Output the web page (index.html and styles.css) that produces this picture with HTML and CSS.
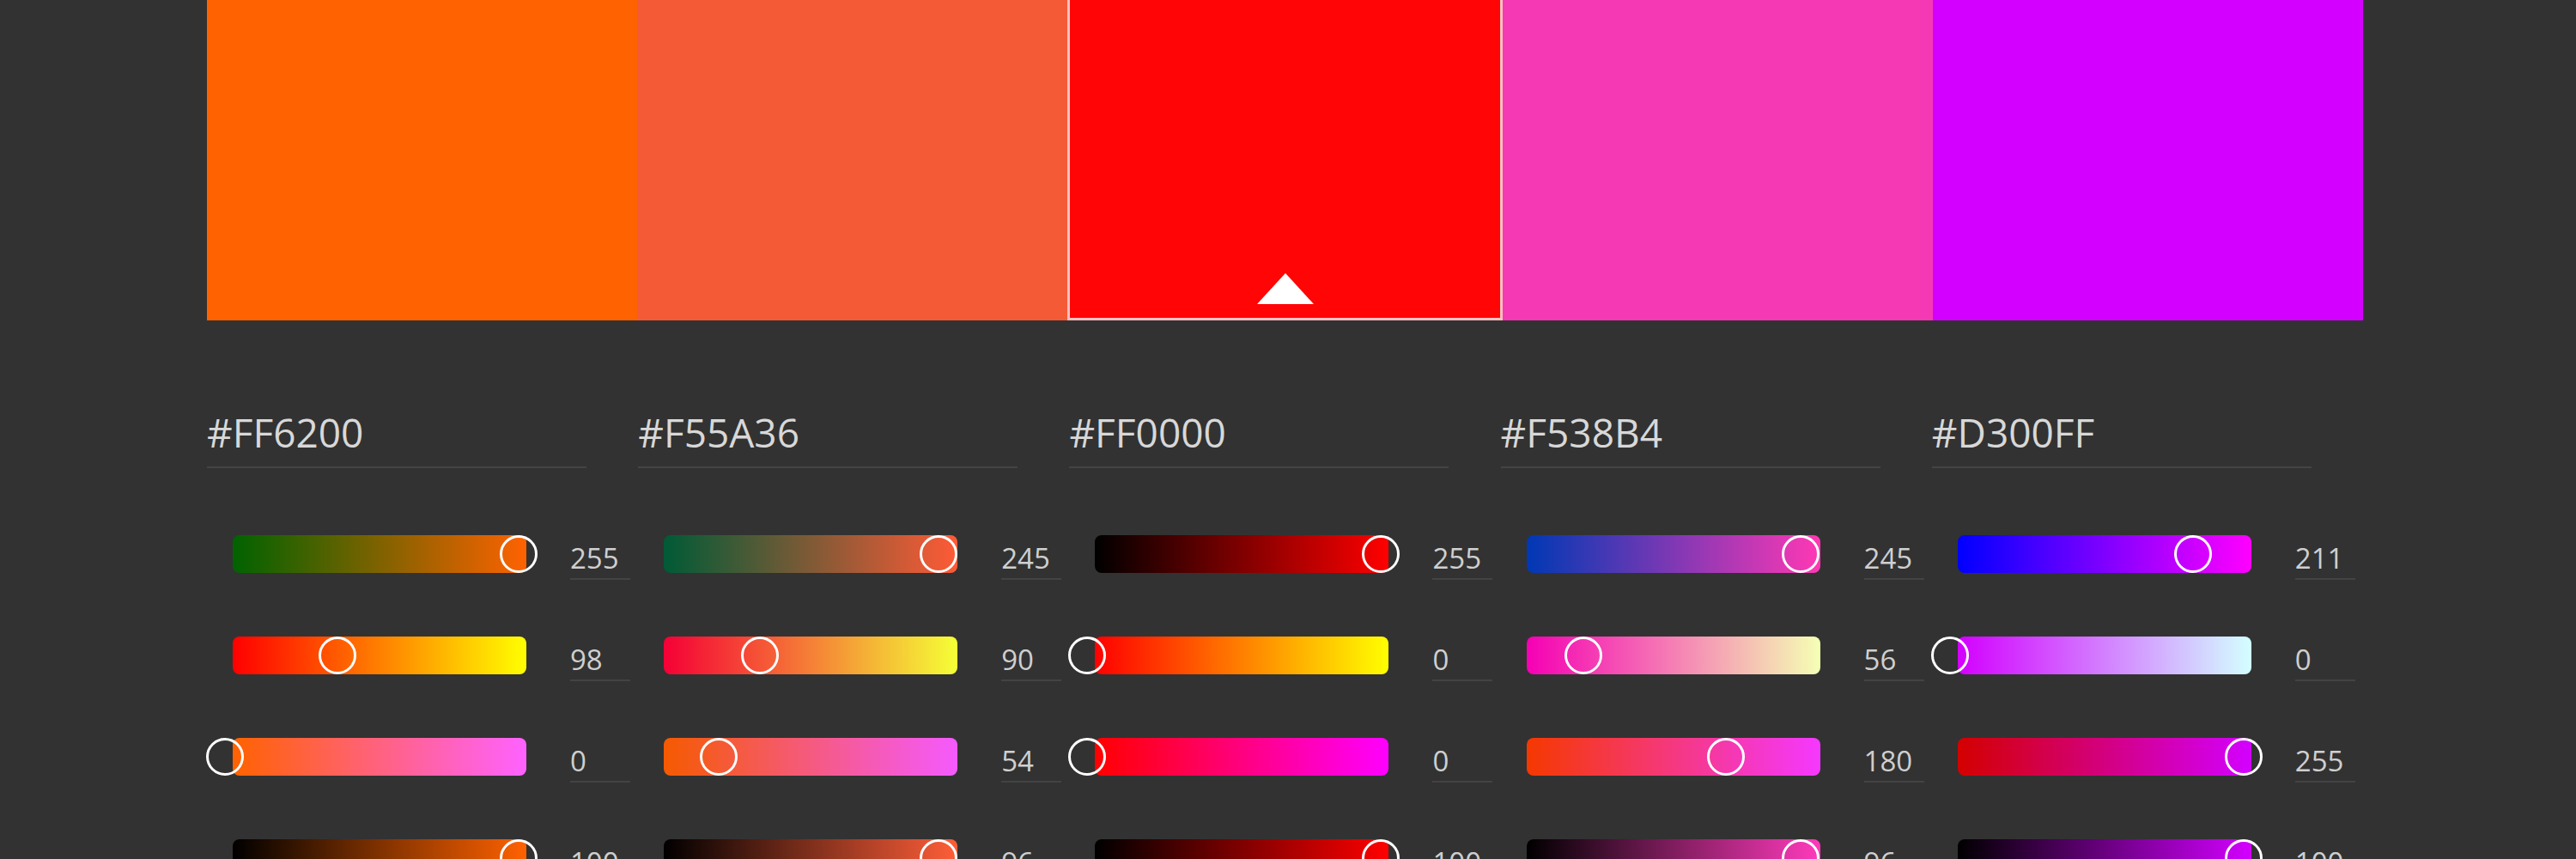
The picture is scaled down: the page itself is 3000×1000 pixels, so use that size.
FILE: index.html
```html
<!DOCTYPE html>
<html lang="en">

<head>
    <meta charset="UTF-8">
    <meta name="viewport" content="width=device-width, initial-scale=1.0">
    <title>Color Theme</title>
    <link rel="stylesheet" href="styles.css">
</head>

<body>

    <div class="swatches">
        <div class="swatch" style="background-color: #ff6200;"></div>
        <div class="swatch" style="background-color: #f55a36;"></div>
        <div class="swatch selected" style="background-color: #ff0505;">
            <span class="marker"></span>
        </div>
        <div class="swatch" style="background-color: #f538b4;"></div>
        <div class="swatch" style="background-color: #d300ff;"></div>
    </div>

    <div class="editors">
        <!-- #FF6200 -->
        <div class="editor">
            <div class="hex">#FF6200</div>
            <div class="channel">
                <div class="track" style="background: linear-gradient(to right, rgb(0,98,0), rgb(255,98,0));">
                    <span class="thumb" style="left: calc(100% - 31px);"></span>
                </div>
                <span class="value">255</span>
            </div>
            <div class="channel">
                <div class="track" style="background: linear-gradient(to right, rgb(255,0,0), rgb(255,255,0));">
                    <span class="thumb" style="left: calc(38.43% - 31px);"></span>
                </div>
                <span class="value">98</span>
            </div>
            <div class="channel">
                <div class="track" style="background: linear-gradient(to right, rgb(255,98,0), rgb(255,98,255));">
                    <span class="thumb" style="left: calc(0% - 31px);"></span>
                </div>
                <span class="value">0</span>
            </div>
            <div class="channel">
                <div class="track" style="background: linear-gradient(to right, #000, rgb(255,98,0));">
                    <span class="thumb" style="left: calc(100% - 31px);"></span>
                </div>
                <span class="value">100</span>
            </div>
        </div>

        <!-- #F55A36 -->
        <div class="editor">
            <div class="hex">#F55A36</div>
            <div class="channel">
                <div class="track" style="background: linear-gradient(to right, rgb(0,90,54), rgb(255,90,54));">
                    <span class="thumb" style="left: calc(96.08% - 31px);"></span>
                </div>
                <span class="value">245</span>
            </div>
            <div class="channel">
                <div class="track" style="background: linear-gradient(to right, rgb(245,0,54), rgb(245,255,54));">
                    <span class="thumb" style="left: calc(35.29% - 31px);"></span>
                </div>
                <span class="value">90</span>
            </div>
            <div class="channel">
                <div class="track" style="background: linear-gradient(to right, rgb(245,90,0), rgb(245,90,255));">
                    <span class="thumb" style="left: calc(21.18% - 31px);"></span>
                </div>
                <span class="value">54</span>
            </div>
            <div class="channel">
                <div class="track" style="background: linear-gradient(to right, #000, rgb(255,94,56));">
                    <span class="thumb" style="left: calc(96% - 31px);"></span>
                </div>
                <span class="value">96</span>
            </div>
        </div>

        <!-- #FF0000 -->
        <div class="editor">
            <div class="hex">#FF0000</div>
            <div class="channel">
                <div class="track" style="background: linear-gradient(to right, #000, #ff0000);">
                    <span class="thumb" style="left: calc(100% - 31px);"></span>
                </div>
                <span class="value">255</span>
            </div>
            <div class="channel">
                <div class="track" style="background: linear-gradient(to right, #ff0000, #ffff00);">
                    <span class="thumb" style="left: calc(0% - 31px);"></span>
                </div>
                <span class="value">0</span>
            </div>
            <div class="channel">
                <div class="track" style="background: linear-gradient(to right, #ff0000, #ff00ff);">
                    <span class="thumb" style="left: calc(0% - 31px);"></span>
                </div>
                <span class="value">0</span>
            </div>
            <div class="channel">
                <div class="track" style="background: linear-gradient(to right, #000, #ff0000);">
                    <span class="thumb" style="left: calc(100% - 31px);"></span>
                </div>
                <span class="value">100</span>
            </div>
        </div>

        <!-- #F538B4 -->
        <div class="editor">
            <div class="hex">#F538B4</div>
            <div class="channel">
                <div class="track" style="background: linear-gradient(to right, rgb(0,56,180), rgb(255,56,180));">
                    <span class="thumb" style="left: calc(96.08% - 31px);"></span>
                </div>
                <span class="value">245</span>
            </div>
            <div class="channel">
                <div class="track" style="background: linear-gradient(to right, rgb(245,0,180), rgb(245,255,180));">
                    <span class="thumb" style="left: calc(21.96% - 31px);"></span>
                </div>
                <span class="value">56</span>
            </div>
            <div class="channel">
                <div class="track" style="background: linear-gradient(to right, rgb(245,56,0), rgb(245,56,255));">
                    <span class="thumb" style="left: calc(70.59% - 31px);"></span>
                </div>
                <span class="value">180</span>
            </div>
            <div class="channel">
                <div class="track" style="background: linear-gradient(to right, #000, rgb(255,58,188));">
                    <span class="thumb" style="left: calc(96% - 31px);"></span>
                </div>
                <span class="value">96</span>
            </div>
        </div>

        <!-- #D300FF -->
        <div class="editor">
            <div class="hex">#D300FF</div>
            <div class="channel">
                <div class="track" style="background: linear-gradient(to right, rgb(0,0,255), rgb(255,0,255));">
                    <span class="thumb" style="left: calc(82.75% - 31px);"></span>
                </div>
                <span class="value">211</span>
            </div>
            <div class="channel">
                <div class="track" style="background: linear-gradient(to right, rgb(211,0,255), rgb(211,255,255));">
                    <span class="thumb" style="left: calc(0% - 31px);"></span>
                </div>
                <span class="value">0</span>
            </div>
            <div class="channel">
                <div class="track" style="background: linear-gradient(to right, rgb(211,0,0), rgb(211,0,255));">
                    <span class="thumb" style="left: calc(100% - 31px);"></span>
                </div>
                <span class="value">255</span>
            </div>
            <div class="channel">
                <div class="track" style="background: linear-gradient(to right, #000, rgb(211,0,255));">
                    <span class="thumb" style="left: calc(100% - 31px);"></span>
                </div>
                <span class="value">100</span>
            </div>
        </div>
    </div>

</body>

</html>
```

FILE: styles.css
```css
body {
    font-family: "Open Sans", "Noto Sans", sans-serif;
    background-color: #323232;
    margin: 0;
    padding: 0;
    overflow: hidden;
}

.swatches {
    display: flex;
    width: 2511px;
    height: 373px;
    margin-left: 241px;
}

.swatch {
    flex: 1;
    box-sizing: border-box;
}

.swatch.selected {
    display: flex;
    justify-content: center;
    align-items: flex-end;
    border: 3px solid rgba(255, 255, 255, 0.75);
    border-top: none;
}

.marker {
    width: 0;
    height: 0;
    margin-bottom: 16px;
    border-left: 33px solid transparent;
    border-right: 33px solid transparent;
    border-bottom: 36px solid #fff;
}

.editors {
    display: grid;
    grid-template-columns: repeat(5, 1fr);
    width: 2511px;
    margin-left: 241px;
}

.hex {
    width: 442px;
    margin-top: 107px;
    margin-bottom: 78px;
    padding-bottom: 17px;
    border-bottom: 2px solid #444;
    color: #d8d8d8;
    font-size: 46px;
    line-height: 46px;
}

.channel {
    display: flex;
    align-items: flex-start;
    height: 44px;
    padding-left: 30px;
    margin-bottom: 74px;
}

.track {
    position: relative;
    width: 342px;
    height: 44px;
    border-radius: 8px;
}

.thumb {
    position: absolute;
    top: 0;
    width: 44px;
    height: 44px;
    box-sizing: border-box;
    border: 3px solid #fff;
    border-radius: 50%;
}

.value {
    width: 70px;
    margin-left: 51px;
    margin-top: 10px;
    padding-bottom: 7px;
    border-bottom: 2px solid #434343;
    color: #cfcfcf;
    font-size: 33px;
    line-height: 33px;
}
```
